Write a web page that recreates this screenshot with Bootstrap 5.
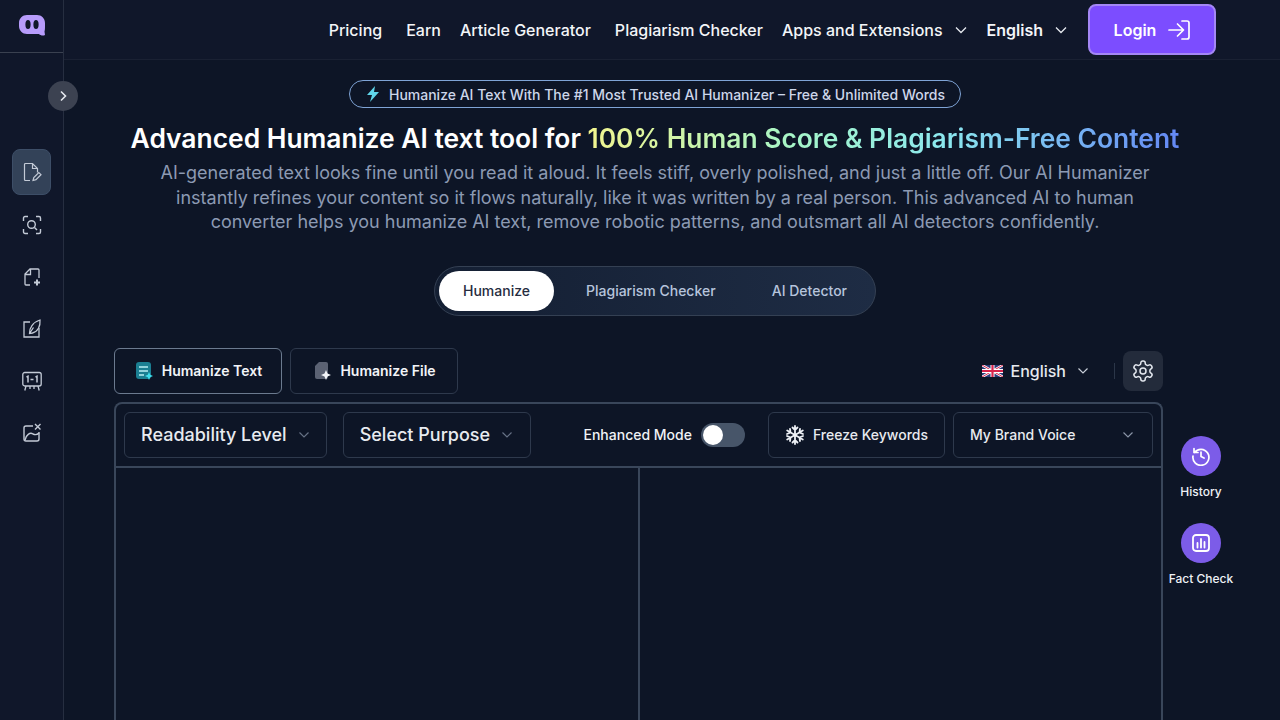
<!DOCTYPE html>
<html lang="en">
<head>
    <meta charset="UTF-8">
    <meta name="viewport" content="width=device-width, initial-scale=1.0">
    <title>AI Humanizer</title>
    <link rel="stylesheet" href="https://cdn.jsdelivr.net/npm/bootstrap@5.3.0/dist/css/bootstrap.min.css">
    <style>
        html, body { height: 100%; overflow: hidden; }
        body { background: #0d1526; font-family: Inter, "Liberation Sans", sans-serif; color: #fff; }
        .app-shell { height: 720px; overflow: hidden; }

        /* left rail */
        .side-rail { width: 64px; flex: none; background: #10172a; border-right: 1px solid #262e40; position: relative; }
        .rail-logo { height: 53px; flex: none; border-bottom: 1px solid #3a4150; padding-bottom: 1px; }
        .rail-toggle { position: absolute; left: 48px; top: 81px; width: 30px; height: 30px; border-radius: 50%; background: #3c4251; z-index: 5; }
        .rail-list { padding-top: 96px; gap: 12px; }
        .rail-btn { width: 39px; height: 40px; border-radius: 8px; color: #c3cad6; }
        .rail-btn.is-active { background: #334258; border: 1px solid #3d4e67; height: 46px; margin-bottom: -2px; }

        /* top bar */
        .top-bar { height: 60px; flex: none; background: #10172a; border-bottom: 1px solid #1a2133; padding-right: 64px; font-size: 16px; font-weight: 500; }
        .top-link { color: #f3f5f8; text-decoration: none; white-space: nowrap; }
        .tight-left { margin-left: -5px; }
        .tighter-left { margin-left: -4px; }
        .login-btn { width: 128px; height: 51px; margin-left: -3px; background: #7c4dff; border: 2px solid #a487f5; border-radius: 8px; color: #fff; font-weight: 600; font-size: 16px; }
        .login-btn:hover { background: #7c4dff; color: #fff; }

        /* hero */
        .hero-wrap { width: 1182px; flex: none; padding-top: 20px; }
        .promo-pill { height: 28px; width: 612px; border-radius: 14px; border: 1px solid #7fa4d6; color: #cdd7ea; font-size: 14px; font-weight: 500; }
        .hero-title { font-size: 26.4px; font-weight: 600; line-height: 33px; margin: 14px 0 0; white-space: nowrap; }
        .grad-text { background: linear-gradient(90deg, #f2f58f 0%, #a5f5c8 35%, #8ce8ee 60%, #6488f5 100%); -webkit-background-clip: text; background-clip: text; color: transparent; }
        .hero-sub { width: 1020px; color: #8c9ab3; font-size: 18px; line-height: 24.5px; margin: 6px 0 0; }
        .mode-tabs { width: 442px; height: 50px; margin-top: 31px; border-radius: 25px; border: 1px solid #344053; background: linear-gradient(90deg, #141f33, #1e2c44); padding: 4px; font-size: 14px; font-weight: 500; }
        .mode-tab { color: #b6c4dc; height: 40px; border-radius: 20px; }
        .mode-tab.is-on { background: #fff; color: #262c40; width: 115px; }
        .mode-tab-second { margin-left: 32px; }

        /* tool */
        .tool-wrap { width: 1049px; margin-left: 50px; margin-top: 32px; }
        .kind-tab { width: 168px; height: 46px; border: 1px solid #2e394c; border-radius: 6px; font-size: 14px; font-weight: 600; color: #f2f4f8; background: #0d1526; }
        .kind-tab.is-on { border-color: #6b7a8f; }
        .lang-pick { font-size: 16px; font-weight: 500; color: #e6e9ef; }
        .lang-sep { width: 1px; height: 16px; background: #2b3648; margin: 0 8px 0 26px; }
        .gear-btn { width: 40px; height: 40px; background: #232b3b; border-radius: 8px; }
        .tool-box { margin-top: 8px; height: 340px; border: 2px solid #39465a; border-radius: 8px 8px 0 0; border-bottom: 0; }
        .tool-bar { height: 64px; border-bottom: 2px solid #39465a; padding: 8px; }
        .pick-box { height: 46px; border: 1px solid #2e394c; border-radius: 6px; color: #e8ebf0; font-weight: 500; }
        .pick-lg { font-size: 18px; padding: 0 17px 0 16px; }
        .pick-purpose { width: 188px; }
        .pick-sm { font-size: 14px; padding: 0 16px; }
        .pick-voice { width: 200px; padding-right: 19px; }
        .mode-label { font-size: 14px; font-weight: 500; color: #f0f2f6; }
        .toggle-track { width: 44px; height: 24px; margin: 0 23px 0 9px; border-radius: 12px; background: #475569; padding: 2px; }
        .toggle-knob { width: 20px; height: 20px; border-radius: 50%; background: #fff; }
        .pane-left { width: 524px; border-right: 2px solid #39465a; }

        /* floating actions */
        .float-col { width: 80px; flex: none; margin-left: -85px; padding-top: 376px; gap: 25px; font-size: 12px; font-weight: 500; color: #eef1f6; }
        .float-circle { width: 40px; height: 40px; flex: none; border-radius: 50%; background: #7c5ce8; margin-bottom: 7px; }
        .float-item { height: 62px; white-space: nowrap; }
    </style>
</head>
<body>
    <div class="app-shell d-flex">
        <!-- left rail -->
        <aside class="side-rail d-flex flex-column align-items-center">
            <div class="rail-logo w-100 d-flex align-items-center justify-content-center">
                <svg width="26" height="21" viewBox="0 0 26 21"><path d="M8 0h10c4.500 0 8 3.500 8 8v3c0 2 0 4-.5 5.500L26 20c-2 1-4.500 .5-6-1H8c-4.500 0-8-3.500-8-8V8c0-4.500 3.500-8 8-8z" fill="#b79cfb"/><ellipse cx="9" cy="9.500" rx="2.600" ry="4.500" fill="#10172a"/><ellipse cx="17" cy="9.500" rx="2.600" ry="4.500" fill="#10172a"/></svg>
            </div>
            <div class="rail-toggle d-flex align-items-center justify-content-center">
                <svg width="12" height="12" viewBox="0 0 12 12" fill="none" stroke="#e5e8ee" stroke-width="1.600"><path d="M4 1.500 8.500 6 4 10.500"/></svg>
            </div>
            <div class="rail-list d-flex flex-column align-items-center">
                <div class="rail-btn is-active d-flex align-items-center justify-content-center">
                    <svg width="20" height="20" viewBox="0 0 20 20" fill="none" stroke="currentColor" stroke-width="1.200"><path d="M8 18.500H3.500a1 1 0 0 1-1-1v-15a1 1 0 0 1 1-1h7l5 5v4M10.500 1.500v5h5"/><path d="M11 18.500l.8-3 5-5 2.200 2.200-5 5z"/></svg>
                </div>
                <div class="rail-btn d-flex align-items-center justify-content-center">
                    <svg width="20" height="20" viewBox="0 0 20 20" fill="none" stroke="currentColor" stroke-width="1.400"><path d="M6 1.500H3a1.500 1.500 0 0 0-1.500 1.500v3M14 1.500h3A1.500 1.500 0 0 1 18.500 3v3M6 18.500H3A1.500 1.500 0 0 1 1.500 17v-3M14 18.500h3a1.500 1.500 0 0 0 1.500-1.500v-3"/><circle cx="9.500" cy="9.500" r="3.800"/><path d="M12.500 12.500 15 15"/></svg>
                </div>
                <div class="rail-btn d-flex align-items-center justify-content-center">
                    <svg width="20" height="20" viewBox="0 0 20 20" fill="none" stroke="currentColor" stroke-width="1.300"><path d="M8 18H4a1 1 0 0 1-1-1V7l5-5h8a1 1 0 0 1 1 1v8M8.500 2v5.500H3"/><path d="M15 12.500v6M12 15.500h6" stroke-width="2"/></svg>
                </div>
                <div class="rail-btn d-flex align-items-center justify-content-center">
                    <svg width="20" height="20" viewBox="0 0 20 20" fill="none" stroke="currentColor" stroke-width="1.300"><path d="M8 3H2v15h15V9"/><path d="M7.500 14.500C7 9.500 11 3 18 1c.5 6-2 11.500-7.500 13zM7.500 14.500l4-6"/></svg>
                </div>
                <div class="rail-btn d-flex align-items-center justify-content-center">
                    <svg width="20" height="20" viewBox="0 0 20 20" fill="none" stroke="currentColor" stroke-width="1.300"><rect x=".8" y="1.500" width="18.400" height="13.500" rx="2"/><path d="M4.500 6 6 5.300V11.500M8.500 8.500h3M13.500 6 15 5.300V11.500" stroke-width="1.500"/><path d="M4 15l-1.200 4.500M16 15l1.200 4.500M8 15v3M12 15v3"/></svg>
                </div>
                <div class="rail-btn d-flex align-items-center justify-content-center">
                    <svg width="20" height="20" viewBox="0 0 20 20" fill="none" stroke="currentColor" stroke-width="1.400"><path d="M11 3H4a2 2 0 0 0-2 2v11a2 2 0 0 0 2 2h11a2 2 0 0 0 2-2V9"/><path d="M13 1l5.500 5.500M18.500 1 13 6.500"/><path d="M3 17c1-5 5-8 8-6 2 1 4 1 6-1"/></svg>
                </div>
            </div>
        </aside>

        <div class="flex-grow-1 d-flex flex-column">
            <!-- top bar -->
            <nav class="top-bar d-flex align-items-center justify-content-end gap-4">
                <a class="top-link" href="#">Pricing</a>
                <a class="top-link" href="#">Earn</a>
                <a class="top-link tight-left" href="#">Article Generator</a>
                <a class="top-link" href="#">Plagiarism Checker</a>
                <a class="top-link tight-left d-flex align-items-center gap-2" href="#">Apps and Extensions
                    <svg class="ms-1" width="12" height="8" viewBox="0 0 12 8" fill="none" stroke="#e5e8ee" stroke-width="1.300"><path d="M1 1.500 6 6.500l5-5"/></svg>
                </a>
                <a class="top-link tighter-left fw-semibold d-flex align-items-center gap-2" href="#">English
                    <svg class="ms-1" width="12" height="8" viewBox="0 0 12 8" fill="none" stroke="#e5e8ee" stroke-width="1.300"><path d="M1 1.500 6 6.500l5-5"/></svg>
                </a>
                <button class="btn login-btn d-flex align-items-center justify-content-center gap-2 p-0" type="button">Login
                    <svg class="ms-1" width="22" height="20" viewBox="0 0 22 20" fill="none" stroke="#fff" stroke-width="1.700" stroke-linecap="round" stroke-linejoin="round"><path d="M1 10h14M9.500 4l6 6-6 6M14 1h5a2 2 0 0 1 2 2v14a2 2 0 0 1-2 2h-5"/></svg>
                </button>
            </nav>

            <div class="d-flex">
                <main class="hero-wrap d-flex flex-column">
                    <div class="d-flex flex-column align-items-center text-center">
                        <div class="promo-pill d-flex align-items-center justify-content-center gap-2">
                            <svg width="16" height="16" viewBox="0 0 16 16"><path d="M10 0 2 9h5l-2 7 9-10H9z" fill="#5fd6ea"/></svg>
                            <span>Humanize AI Text With The #1 Most Trusted AI Humanizer – Free &amp; Unlimited Words</span>
                        </div>
                        <h1 class="hero-title">Advanced Humanize AI text tool for <span class="grad-text">100% Human Score &amp; Plagiarism-Free Content</span></h1>
                        <p class="hero-sub">AI-generated text looks fine until you read it aloud. It feels stiff, overly polished, and just a little off. Our AI Humanizer instantly refines your content so it flows naturally, like it was written by a real person. This advanced AI to human converter helps you humanize AI text, remove robotic patterns, and outsmart all AI detectors confidently.</p>
                        <div class="mode-tabs d-flex align-items-center">
                            <div class="mode-tab is-on d-flex align-items-center justify-content-center">Humanize</div>
                            <div class="mode-tab mode-tab-second d-flex align-items-center justify-content-center">Plagiarism Checker</div>
                            <div class="mode-tab d-flex align-items-center justify-content-center ms-auto me-4">AI Detector</div>
                        </div>
                    </div>

                    <section class="tool-wrap">
                        <div class="d-flex align-items-center">
                            <div class="kind-tab is-on d-flex align-items-center justify-content-center gap-2">
                                <svg width="20" height="20" viewBox="0 0 20 20"><rect x="2" y="1" width="15" height="17" rx="3" fill="#1b7f92"/><path d="M5 6h9M5 10h9M5 14h5" stroke="#b8f0f5" stroke-width="1.400"/><path d="M15 11l1.200 2.800L19 15l-2.800 1.200L15 19l-1.200-2.800L11 15l2.800-1.200z" fill="#3ee0ee"/></svg>
                                Humanize Text
                            </div>
                            <div class="kind-tab ms-2 d-flex align-items-center justify-content-center gap-2">
                                <svg width="20" height="20" viewBox="0 0 20 20"><path d="M7 1h7a2 2 0 0 1 2 2v13a2 2 0 0 1-2 2H5a2 2 0 0 1-2-2V5z" fill="#5b6273"/><path d="M14 9l1.500 3.500L19 14l-3.500 1.500L14 19l-1.500-3.500L9 14l3.500-1.500z" fill="#f2f4f8"/></svg>
                                Humanize File
                            </div>
                            <div class="lang-pick ms-auto d-flex align-items-center gap-2">
                                <svg width="21" height="12" viewBox="0 0 21 12"><rect width="21" height="12" fill="#2b3a78"/><path d="M0 0l21 12M21 0 0 12" stroke="#fff" stroke-width="2.400"/><path d="M0 0l21 12M21 0 0 12" stroke="#d8234c" stroke-width="1"/><path d="M10.500 0v12M0 6h21" stroke="#fff" stroke-width="4"/><path d="M10.500 0v12M0 6h21" stroke="#d8234c" stroke-width="2.200"/></svg>
                                <span>English</span>
                                <svg class="ms-1" width="10" height="6" viewBox="0 0 10 6" fill="none" stroke="#c8ced8" stroke-width="1.200"><path d="M.500 .500 5 5 9.500 .500"/></svg>
                            </div>
                            <div class="lang-sep"></div>
                            <div class="gear-btn d-flex align-items-center justify-content-center">
                                <svg width="24" height="24" viewBox="0 0 24 24" fill="none" stroke="#e3e7ee" stroke-width="1.500" stroke-linejoin="round"><path d="M12.220 2h-.44a2 2 0 0 0-2 2v.18a2 2 0 0 1-1 1.730l-.43.250a2 2 0 0 1-2 0l-.15-.08a2 2 0 0 0-2.730.730l-.22.380a2 2 0 0 0 .730 2.730l.15.100a2 2 0 0 1 1 1.720v.510a2 2 0 0 1-1 1.740l-.15.090a2 2 0 0 0-.730 2.730l.22.380a2 2 0 0 0 2.730.730l.15-.08a2 2 0 0 1 2 0l.43.250a2 2 0 0 1 1 1.730V20a2 2 0 0 0 2 2h.44a2 2 0 0 0 2-2v-.18a2 2 0 0 1 1-1.730l.43-.25a2 2 0 0 1 2 0l.15.080a2 2 0 0 0 2.730-.730l.22-.39a2 2 0 0 0-.730-2.730l-.15-.08a2 2 0 0 1-1-1.740v-.5a2 2 0 0 1 1-1.740l.15-.09a2 2 0 0 0 .730-2.730l-.22-.38a2 2 0 0 0-2.730-.730l-.15.080a2 2 0 0 1-2 0l-.43-.25a2 2 0 0 1-1-1.730V4a2 2 0 0 0-2-2z"/><circle cx="12" cy="12" r="3"/></svg>
                            </div>
                        </div>

                        <div class="tool-box">
                            <div class="tool-bar d-flex align-items-center">
                                <div class="pick-box pick-lg d-flex align-items-center gap-2">
                                    Readability Level
                                    <svg class="ms-1" width="10" height="6" viewBox="0 0 10 6" fill="none" stroke="#667185" stroke-width="1.200"><path d="M.500 .500 5 5 9.500 .500"/></svg>
                                </div>
                                <div class="pick-box pick-lg pick-purpose d-flex align-items-center gap-2 ms-3">
                                    Select Purpose
                                    <svg class="ms-1" width="10" height="6" viewBox="0 0 10 6" fill="none" stroke="#667185" stroke-width="1.200"><path d="M.500 .500 5 5 9.500 .500"/></svg>
                                </div>
                                <span class="mode-label ms-auto">Enhanced Mode</span>
                                <div class="toggle-track"><div class="toggle-knob"></div></div>
                                <div class="pick-box pick-sm d-flex align-items-center gap-2">
                                    <svg width="20" height="20" viewBox="0 0 20 20" fill="none" stroke="#eef1f6" stroke-width="1.800" stroke-linecap="round"><path d="M10 1v18M2.200 5.500l15.600 9M17.800 5.500l-15.600 9M7.500 2.500 10 5l2.500-2.500M7.500 17.500 10 15l2.500 2.500M2 9l3.500-1.500L5 4M18 9l-3.500-1.500L15 4M2 11l3.500 1.500L5 16M18 11l-3.500 1.500L15 16"/></svg>
                                    Freeze Keywords
                                </div>
                                <div class="pick-box pick-sm pick-voice d-flex align-items-center ms-2">
                                    My Brand Voice
                                    <svg class="ms-auto" width="10" height="6" viewBox="0 0 10 6" fill="none" stroke="#8a94a6" stroke-width="1.200"><path d="M.500 .500 5 5 9.500 .500"/></svg>
                                </div>
                            </div>
                            <div class="d-flex h-100">
                                <div class="pane-left"></div>
                                <div class="flex-grow-1"></div>
                            </div>
                        </div>
                    </section>
                </main>

                <!-- floating actions, to the right of the tool box -->
                <aside class="float-col d-flex flex-column align-items-center">
                    <div class="float-item d-flex flex-column align-items-center">
                        <div class="float-circle d-flex align-items-center justify-content-center">
                            <svg width="20" height="20" viewBox="0 0 20 20" fill="none" stroke="#fff" stroke-width="1.700" stroke-linecap="round" stroke-linejoin="round"><path d="M3.500 6.500A8 8 0 1 1 2 10M3 2.500v4h4M10 6v4.500l3 1.500"/></svg>
                        </div>
                        History
                    </div>
                    <div class="float-item d-flex flex-column align-items-center">
                        <div class="float-circle d-flex align-items-center justify-content-center">
                            <svg width="20" height="20" viewBox="0 0 20 20" fill="none" stroke="#fff" stroke-width="1.800" stroke-linecap="round"><rect x="2" y="2" width="16" height="16" rx="3"/><path d="M6.500 10v4.500M10 6v8.500M13.500 9v5.500"/></svg>
                        </div>
                        Fact Check
                    </div>
                </aside>
            </div>
        </div>
    </div>
    <script src="https://cdn.jsdelivr.net/npm/bootstrap@5.3.0/dist/js/bootstrap.bundle.min.js"></script>
</body>
</html>
